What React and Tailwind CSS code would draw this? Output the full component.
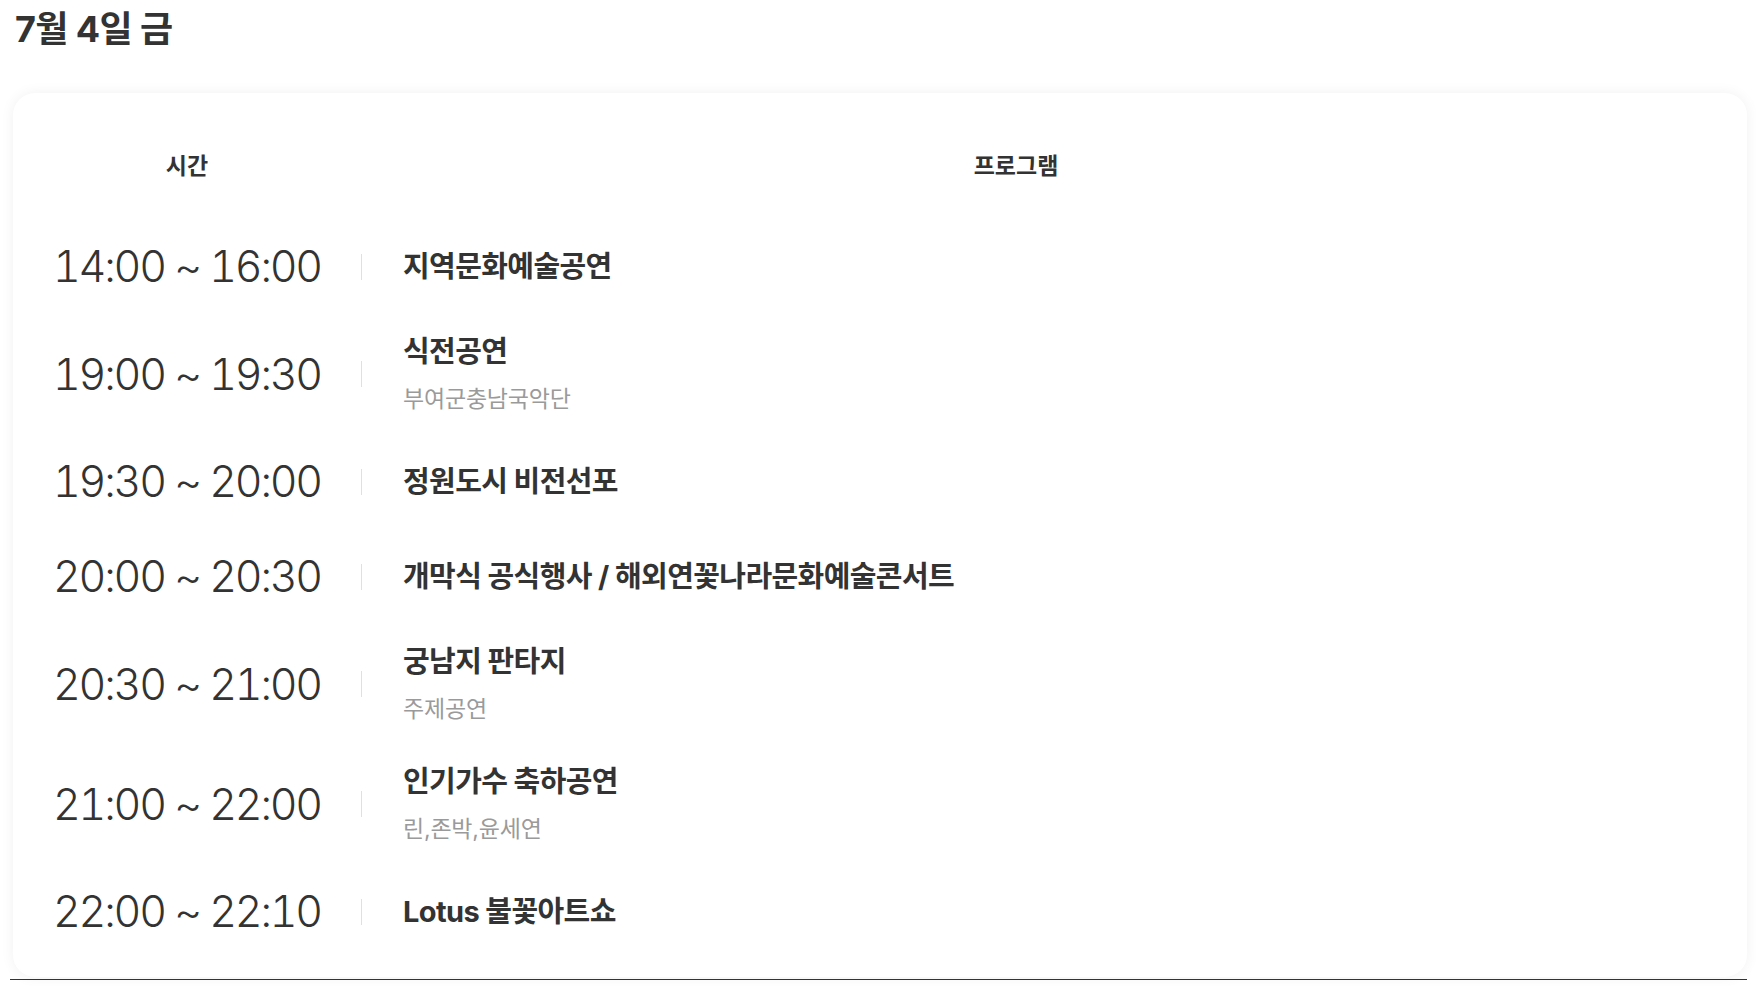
const schedule = [
  { time: "14:00 ~ 16:00", title: "지역문화예술공연" },
  { time: "19:00 ~ 19:30", title: "식전공연", sub: "부여군충남국악단" },
  { time: "19:30 ~ 20:00", title: "정원도시 비전선포" },
  { time: "20:00 ~ 20:30", title: "개막식 공식행사 / 해외연꽃나라문화예술콘서트" },
  { time: "20:30 ~ 21:00", title: "궁남지 판타지", sub: "주제공연" },
  { time: "21:00 ~ 22:00", title: "인기가수 축하공연", sub: "린,존박,윤세연" },
  { time: "22:00 ~ 22:10", title: "Lotus 불꽃아트쇼" },
];

function Row({ item }) {
  return (
    <div className="flex items-center py-[19px]">
      <div className="w-[348px] shrink-0 text-center text-[43px] leading-[57px] font-[260] tabular-nums tracking-[-2.2px] text-[#333]">
        {item.time}
      </div>
      <span className="w-px h-[26px] bg-[#e0e0e0] shrink-0" />
      <div className="pl-[41px] flex flex-col">
        <div className="text-[29px] leading-[38px] font-bold tracking-[-0.6px] text-[#333]">
          {item.title}
        </div>
        {item.sub && (
          <div className="mt-[12px] text-[23px] leading-[32px] tracking-[-0.2px] text-[#9a9a9a]">
            {item.sub}
          </div>
        )}
      </div>
    </div>
  );
}

export default function App() {
  return (
    <div className="min-h-screen bg-white font-['Inter','Noto_Sans_CJK_KR',sans-serif]">
      <h2 className="pt-[8px] pl-[15px] text-[36px] leading-[42px] font-bold tracking-[-0.6px] text-[#333]">
        7월 4일 금
      </h2>

      <div className="mt-[43px] ml-[13px] mr-[9px] bg-white rounded-[22px] shadow-[0_0_14px_rgba(0,0,0,0.06)] pt-[58px] pb-[18px] pr-[76px]">
        <div className="flex mb-[38px] text-[23px] leading-[30px] font-bold text-[#333]">
          <div className="w-[348px] shrink-0 text-center">시간</div>
          <div className="flex-1 text-center">프로그램</div>
        </div>

        {schedule.map((item) => (
          <Row key={item.time} item={item} />
        ))}
      </div>
      <div className="ml-[10px] mr-[9px] mt-[2px] h-px bg-[#333]" />
    </div>
  );
}
